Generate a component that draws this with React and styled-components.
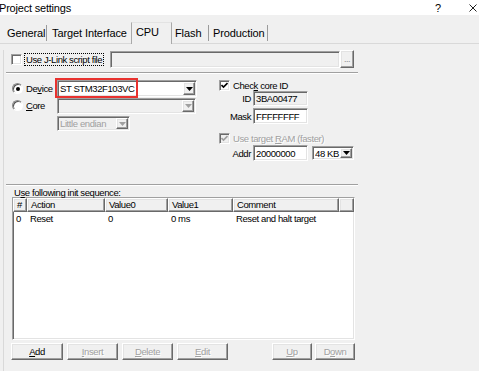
import React from "react";
import styled, { createGlobalStyle, css } from "styled-components";

const GlobalStyle = createGlobalStyle`
  html, body {
    margin: 0;
    padding: 0;
    background: #f0f0f0;
  }
  body {
    font-family: "Liberation Sans", Arial, sans-serif;
    font-size: 9.5px;
    letter-spacing: -0.4px;
    color: #000;
  }
  * {
    box-sizing: border-box;
  }
`;

const sunken = css`
  border: 1px solid;
  border-color: #a0a0a0 #ffffff #ffffff #a0a0a0;
  box-shadow: inset 1px 1px 0 #696969, inset -1px -1px 0 #e3e3e3;
`;

const raised = css`
  border: 1px solid;
  border-color: #ffffff #696969 #696969 #ffffff;
  box-shadow: inset -1px -1px 0 #a0a0a0, inset 1px 1px 0 #e3e3e3;
`;

const Window = styled.div`
  width: 479px;
  height: 371px;
  overflow: hidden;
  background: #f0f0f0;
`;

const TitleBar = styled.div`
  height: 15px;
  background: #fff;
  display: flex;
  align-items: center;
  font-size: 11px;
  letter-spacing: -0.2px;
`;

const Title = styled.span`
  margin-left: -1px;
`;

const TitleControls = styled.div`
  margin-left: auto;
  display: flex;
  align-items: center;
  gap: 28px;
  padding-right: 2px;
`;

const TabStrip = styled.div`
  height: 29px;
  display: flex;
  align-items: flex-end;
  padding-left: 4px;
  border-bottom: 1px solid #d9d9d9;
  font-size: 11px;
  letter-spacing: -0.1px;
`;

const Tab = styled.div`
  width: ${(p) => p.$w}px;
  height: 16px;
  margin-bottom: 2px;
  padding-left: ${(p) => p.$pad}px;
  line-height: 16px;
  white-space: nowrap;
  border-right: 1px solid ${(p) => (p.$sep ? "#9b9b9b" : "transparent")};
  ${(p) =>
    p.$active &&
    css`
      height: 22px;
      margin-bottom: -1px;
      line-height: 19px;
      border: 1px solid #a9a9a9;
      border-top-color: #e3e3e3;
      border-bottom: none;
      background: #f0f0f0;
    `}
`;

const Page = styled.div`
  margin-left: 3px;
  border-left: 1px solid #d9d9d9;
  height: 327px;
`;

const ScriptRow = styled.div`
  display: grid;
  grid-template-columns: 99px 230px 14px;
  align-items: center;
  height: 18px;
  margin-top: 6px;
  padding-left: 7px;
`;

const CheckWrap = styled.div`
  display: flex;
  align-items: center;
  gap: ${(p) => p.$gap ?? 3}px;
  height: ${(p) => p.$h ?? 11}px;
  margin-top: ${(p) => p.$mt ?? 0}px;
  color: ${(p) => (p.$disabled ? "#a0a0a0" : "#000")};
  text-shadow: ${(p) => (p.$disabled ? "1px 1px 0 #fff" : "none")};
  white-space: nowrap;
`;

const Box = styled.span`
  width: 11px;
  height: 11px;
  flex: none;
  ${sunken}
  background: ${(p) => (p.$disabled ? "#f0f0f0" : "#fff")};
  display: flex;
  align-items: center;
  justify-content: center;
`;

const FocusLabel = styled.span`
  outline: 1px dotted #000;
  padding: 0 1px;
  line-height: 11px;
  white-space: nowrap;
`;

const TextField = styled.div`
  width: ${(p) => p.$w}px;
  height: ${(p) => p.$h}px;
  ${sunken}
  background: ${(p) => (p.$readonly ? "#f0f0f0" : "#fff")};
  padding-left: 2px;
  display: flex;
  align-items: center;
  white-space: nowrap;
`;

const BrowseButton = styled.div`
  width: 14px;
  height: 18px;
  margin-top: -1px;
  ${raised}
  background: #f0f0f0;
  color: #8a8a8a;
  display: flex;
  align-items: center;
  justify-content: center;
  font-size: 9px;
  letter-spacing: -0.5px;
`;

const Separator = styled.div`
  margin: ${(p) => p.$mt}px 0 0 2px;
  width: 352px;
  height: 2px;
  border-top: 1px solid #a0a0a0;
  border-bottom: 1px solid #fff;
`;

const TargetSection = styled.div`
  display: grid;
  grid-template-columns: 207px 1fr;
  height: 110px;
  padding: 6px 0 0 8px;
`;

const LeftGrid = styled.div`
  display: grid;
  grid-template-columns: 45px 140px;
  grid-template-rows: 17px 17px 15px;
  row-gap: 1px;
  align-items: start;
`;

const RadioLabel = styled.label`
  display: flex;
  align-items: center;
  gap: 3px;
  height: 17px;
  margin-top: ${(p) => p.$mt ?? 0}px;
`;

const RadioDot = styled.span`
  width: 11px;
  height: 11px;
  border-radius: 50%;
  border: 1px solid;
  border-color: #8a8a8a #fff #fff #8a8a8a;
  box-shadow: inset 1px 1px 0 #555;
  background: #fff;
  display: flex;
  align-items: center;
  justify-content: center;
  &::after {
    content: "";
    width: 4px;
    height: 4px;
    border-radius: 50%;
    background: ${(p) => (p.$on ? "#000" : "transparent")};
  }
`;

const ComboWrap = styled.div`
  position: relative;
  grid-column: 2;
`;

const RedMark = styled.div`
  position: absolute;
  left: -2px;
  top: -2px;
  width: 83px;
  height: 20px;
  border: 2px solid #e8322f;
  pointer-events: none;
`;

const Combo = styled.div`
  grid-column: 2;
  width: ${(p) => p.$w}px;
  height: ${(p) => p.$h}px;
  margin-left: ${(p) => p.$ml ?? 0}px;
  ${sunken}
  background: ${(p) => (p.$disabled ? "#f0f0f0" : "#fff")};
  color: ${(p) => (p.$disabled ? "#a0a0a0" : "#000")};
  display: flex;
  align-items: stretch;
  padding: 0 1px 0 2px;
`;

const ComboText = styled.span`
  flex: 1;
  display: flex;
  align-items: center;
  white-space: nowrap;
  overflow: hidden;
`;

const DropButton = styled.span`
  width: 12px;
  flex: none;
  margin: 1px 0;
  ${raised}
  background: #f0f0f0;
  display: flex;
  align-items: center;
  justify-content: center;
`;

const RightCol = styled.div`
  display: flex;
  flex-direction: column;
`;

const FieldRow = styled.div`
  display: flex;
  align-items: center;
  gap: 2px;
  margin-top: ${(p) => p.$mt ?? 0}px;
`;

const FieldLabel = styled.span`
  width: 32px;
  text-align: right;
`;

const SeqLabel = styled.div`
  margin-top: 1px;
  height: 10px;
  line-height: 11px;
  padding-left: 10px;
`;

const Table = styled.div`
  margin-left: 8px;
  width: 343px;
  height: 143px;
  ${sunken}
  background: #fff;
  overflow: hidden;
`;

const columns = "14px 78px 63px 65px 106px 1fr";

const HeadRow = styled.div`
  display: grid;
  grid-template-columns: ${columns};
  height: 14px;
`;

const HeadCell = styled.div`
  ${raised}
  background: #f0f0f0;
  padding-left: 3px;
  line-height: 12px;
  white-space: nowrap;
`;

const DataRow = styled.div`
  display: grid;
  grid-template-columns: ${columns};
  height: 14px;
  line-height: 14px;
`;

const DataCell = styled.div`
  padding-left: 3px;
  white-space: nowrap;
`;

const ButtonRow = styled.div`
  display: flex;
  justify-content: space-between;
  margin: 3px 0 0 7px;
  width: 344px;
`;

const ButtonGroup = styled.div`
  display: flex;
  gap: ${(p) => p.$gap}px;
`;

const Button = styled.div`
  width: ${(p) => p.$w}px;
  height: 17px;
  ${raised}
  background: #f0f0f0;
  display: flex;
  align-items: center;
  justify-content: center;
  color: ${(p) => (p.$disabled ? "#a0a0a0" : "#000")};
  text-shadow: ${(p) => (p.$disabled ? "1px 1px 0 #fff" : "none")};
`;

const U = styled.span`
  text-decoration: underline;
`;

function CheckMark({ color }) {
  return (
    <svg width="7" height="7" viewBox="0 0 7 7">
      <path d="M0.5 3 L2.5 5 L6.5 1" fill="none" stroke={color} strokeWidth="1.6" />
    </svg>
  );
}

function Arrow({ color = "#000" }) {
  return (
    <svg width="7" height="4" viewBox="0 0 7 4">
      <path d="M0 0 H7 L3.5 4 Z" fill={color} />
    </svg>
  );
}

function CloseIcon() {
  return (
    <svg width="8" height="8" viewBox="0 0 8 8">
      <path d="M0.5 0.5 L7.5 7.5 M7.5 0.5 L0.5 7.5" stroke="#222" strokeWidth="1" />
    </svg>
  );
}

export default function App() {
  return (
    <Window>
      <GlobalStyle />
      <TitleBar>
        <Title>Project settings</Title>
        <TitleControls>
          <span>?</span>
          <CloseIcon />
        </TitleControls>
      </TitleBar>

      <TabStrip>
        <Tab $w={43} $pad={3} $sep>General</Tab>
        <Tab $w={84} $pad={5}>Target Interface</Tab>
        <Tab $w={41} $pad={4} $active>CPU</Tab>
        <Tab $w={37} $pad={3} $sep>Flash</Tab>
        <Tab $w={59} $pad={4} $sep>Production</Tab>
      </TabStrip>

      <Page>
        <ScriptRow>
          <CheckWrap>
            <Box />
            <FocusLabel>Use J-Link script file</FocusLabel>
          </CheckWrap>
          <TextField $w={230} $h={17} $readonly />
          <BrowseButton>...</BrowseButton>
        </ScriptRow>

        <Separator $mt={4} />

        <TargetSection>
          <LeftGrid>
            <RadioLabel>
              <RadioDot $on />
              <span>De<U>v</U>ice</span>
            </RadioLabel>
            <ComboWrap>
              <Combo $w={140} $h={17}>
                <ComboText>ST STM32F103VC</ComboText>
                <DropButton><Arrow /></DropButton>
              </Combo>
              <RedMark />
            </ComboWrap>

            <RadioLabel $mt={-1}>
              <RadioDot />
              <span><U>C</U>ore</span>
            </RadioLabel>
            <Combo $w={139} $h={16} $disabled>
              <ComboText />
              <DropButton><Arrow color="#a0a0a0" /></DropButton>
            </Combo>

            <Combo $w={73} $h={15} $disabled>
              <ComboText>Little endian</ComboText>
              <DropButton><Arrow color="#a0a0a0" /></DropButton>
            </Combo>
          </LeftGrid>

          <RightCol>
            <CheckWrap>
              <Box><CheckMark color="#000" /></Box>
              <span>Chec<U>k</U> core ID</span>
            </CheckWrap>
            <FieldRow>
              <FieldLabel>ID</FieldLabel>
              <TextField $w={55} $h={15} $readonly>3BA00477</TextField>
            </FieldRow>
            <FieldRow $mt={2}>
              <FieldLabel>Mask</FieldLabel>
              <TextField $w={55} $h={16}>FFFFFFFF</TextField>
            </FieldRow>
            <CheckWrap $mt={9} $h={10} $disabled>
              <Box $disabled><CheckMark color="#a0a0a0" /></Box>
              <span>Use target <U>R</U>AM (faster)</span>
            </CheckWrap>
            <FieldRow $mt={2}>
              <FieldLabel>Addr</FieldLabel>
              <TextField $w={55} $h={16}>20000000</TextField>
              <Combo $w={42} $h={14} $ml={2}>
                <ComboText>48 KB</ComboText>
                <DropButton><Arrow /></DropButton>
              </Combo>
            </FieldRow>
          </RightCol>
        </TargetSection>

        <Separator $mt={0} />

        <SeqLabel>U<U>s</U>e following init sequence:</SeqLabel>
        <Table>
          <HeadRow>
            <HeadCell>#</HeadCell>
            <HeadCell>Action</HeadCell>
            <HeadCell>Value0</HeadCell>
            <HeadCell>Value1</HeadCell>
            <HeadCell>Comment</HeadCell>
            <HeadCell />
          </HeadRow>
          <DataRow>
            <DataCell>0</DataCell>
            <DataCell>Reset</DataCell>
            <DataCell>0</DataCell>
            <DataCell>0 ms</DataCell>
            <DataCell>Reset and halt target</DataCell>
            <DataCell />
          </DataRow>
        </Table>

        <ButtonRow>
          <ButtonGroup $gap={4}>
            <Button $w={52}><span><U>A</U>dd</span></Button>
            <Button $w={51} $disabled><span><U>I</U>nsert</span></Button>
            <Button $w={51} $disabled><span><U>D</U>elete</span></Button>
            <Button $w={51} $disabled><span><U>E</U>dit</span></Button>
          </ButtonGroup>
          <ButtonGroup $gap={3}>
            <Button $w={40} $disabled><span><U>U</U>p</span></Button>
            <Button $w={40} $disabled><span>D<U>o</U>wn</span></Button>
          </ButtonGroup>
        </ButtonRow>
      </Page>
    </Window>
  );
}
